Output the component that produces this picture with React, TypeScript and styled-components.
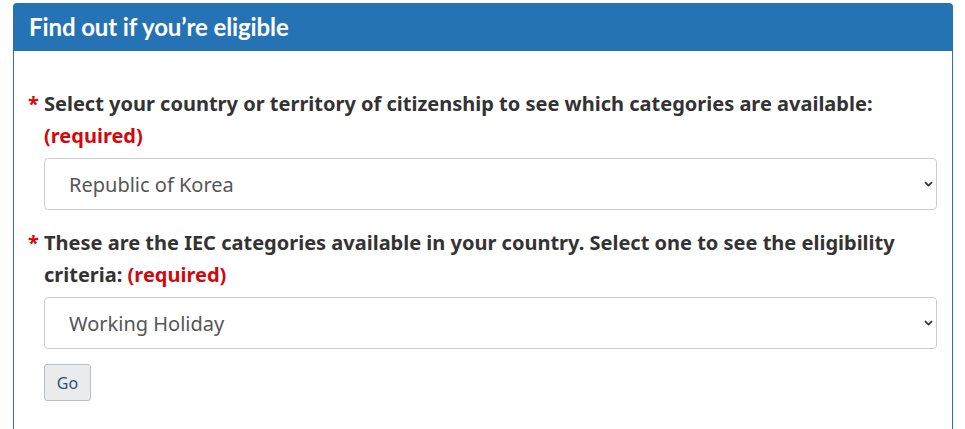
import styled, { createGlobalStyle } from "styled-components";

const Global = createGlobalStyle`
  html, body {
    margin: 0;
    padding: 0;
    background: #fff;
  }
  body {
    font-family: "Noto Sans", "Open Sans", sans-serif;
    color: #333;
  }
`;

const Panel = styled.section`
  width: 940px;
  margin: 3px 0 0 13px;
  border: 1px solid #2572b4;
  border-bottom: 0;
  border-radius: 4px 4px 0 0;
  height: 440px;
  box-sizing: border-box;
`;

const Heading = styled.h3`
  margin: 0;
  height: 47px;
  padding: 0 16px 2px 15px;
  box-sizing: border-box;
  display: flex;
  align-items: center;
  background: #2572b4;
  color: #fff;
  font-family: Lato, "Noto Sans", sans-serif;
  font-weight: 700;
  font-size: 24px;
  letter-spacing: -0.1px;
`;

const Body = styled.div`
  padding: 37px 15px 0 14px;
  display: flex;
  flex-direction: column;
`;

const Field = styled.div<{ $gap?: number }>`
  display: flex;
  margin-top: ${(p) => p.$gap ?? 0}px;
`;

const Star = styled.span`
  width: 16px;
  flex: none;
  color: #d3080c;
  font-weight: 700;
  font-size: 20px;
  line-height: 32px;
`;

const Column = styled.div`
  flex: 1;
  display: flex;
  flex-direction: column;
`;

const Label = styled.label`
  font-weight: 700;
  font-size: 20px;
  line-height: 32px;
  color: #333;
`;

const Required = styled.strong`
  color: #d3080c;
  font-weight: 700;
`;

const SelectWrap = styled.div`
  position: relative;
  margin-top: 6px;
`;

const Select = styled.select`
  appearance: none;
  -webkit-appearance: none;
  width: 100%;
  height: 52px;
  box-sizing: border-box;
  border: 1px solid #ccc;
  border-radius: 4px;
  background: #fff;
  padding: 0 24px 0 24px;
  font-family: "Noto Sans", "Open Sans", sans-serif;
  font-size: 20px;
  color: #555;
  outline: none;
`;

const Chevron = styled.svg`
  position: absolute;
  right: 4px;
  top: 23px;
  pointer-events: none;
`;

const Button = styled.button`
  align-self: flex-start;
  margin-top: 15px;
  width: 47px;
  height: 37px;
  border: 1px solid #bbbfc5;
  border-radius: 3px;
  background: #eaebed;
  color: #335075;
  font-family: "Noto Sans", "Open Sans", sans-serif;
  font-size: 16px;
  padding: 0;
`;

function Dropdown({ value }: { value: string }) {
  return (
    <SelectWrap>
      <Select defaultValue={value}>
        <option>{value}</option>
      </Select>
      <Chevron width="9" height="6" viewBox="0 0 9 6">
        <path d="M1 1.2 L4.5 4.6 L8 1.2" fill="none" stroke="#333" strokeWidth="1.8" />
      </Chevron>
    </SelectWrap>
  );
}

export default function App() {
  return (
    <>
      <Global />
      <Panel>
        <Heading>Find out if you’re eligible</Heading>
        <Body>
          <Field>
            <Star>*</Star>
            <Column>
              <Label>
                Select your country or territory of citizenship to see which categories are available:{" "}
                <Required>(required)</Required>
              </Label>
              <Dropdown value="Republic of Korea" />
            </Column>
          </Field>
          <Field $gap={17}>
            <Star>*</Star>
            <Column>
              <Label>
                These are the IEC categories available in your country. Select one to see the eligibility
                criteria: <Required>(required)</Required>
              </Label>
              <Dropdown value="Working Holiday" />
              <Button>Go</Button>
            </Column>
          </Field>
        </Body>
      </Panel>
    </>
  );
}
